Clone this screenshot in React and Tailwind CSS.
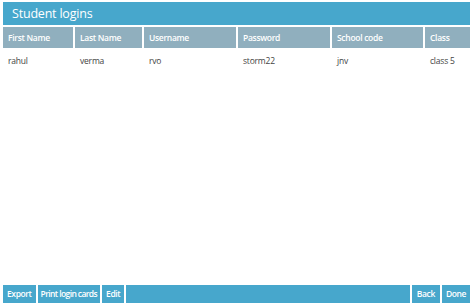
const cols = [
  { label: 'First Name', w: 'w-[70px]', value: 'rahul' },
  { label: 'Last Name', w: 'w-[67px]', value: 'verma' },
  { label: 'Username', w: 'w-[92px]', value: 'rvo' },
  { label: 'Password', w: 'w-[92px]', value: 'storm22' },
  { label: 'School code', w: 'w-[91px]', value: 'jnv' },
  { label: 'Class', w: 'flex-1', value: 'class 5' },
];

export default function App() {
  return (
    <div
      className="w-[474px] h-[307px] bg-white flex flex-col px-[3px] pt-[2px] pb-[4px] overflow-hidden"
      style={{ fontFamily: '"Open Sans", sans-serif' }}
    >
      <div className="w-[467px] h-[23px] bg-[#47a7cc] text-white text-[12.5px] tracking-[-0.2px] leading-[23px] pl-[9px]">
        Student logins
      </div>
      <div className="w-[467px] flex gap-[2px] mt-[2px] h-[21px]">
        {cols.map(c => (
          <div key={c.label} className={`${c.w} bg-[#90afbe] text-white text-[8.5px] font-semibold tracking-[-0.3px] leading-[21px] pl-[5px]`}>
            {c.label}
          </div>
        ))}
      </div>
      <div className="w-[467px] flex gap-[2px] h-[25px]">
        {cols.map(c => (
          <div key={c.label} className={`${c.w} text-[#444] text-[8.5px] tracking-[-0.2px] leading-[25px] pl-[5px]`}>
            {c.value}
          </div>
        ))}
      </div>
      <div className="flex-1" />
      <div className="w-[467px] flex gap-[2px] h-[18px] text-white text-[8.5px] font-semibold tracking-[-0.4px] leading-[18px]">
        <div className="bg-[#47a7cc] px-[4px]">Export</div>
        <div className="bg-[#47a7cc] px-[3px] tracking-[-0.6px]">Print login cards</div>
        <div className="bg-[#47a7cc] px-[4px]">Edit</div>
        <div className="bg-[#47a7cc] flex-1" />
        <div className="bg-[#47a7cc] px-[5px]">Back</div>
        <div className="bg-[#47a7cc] px-[4px]">Done</div>
      </div>
    </div>
  );
}
